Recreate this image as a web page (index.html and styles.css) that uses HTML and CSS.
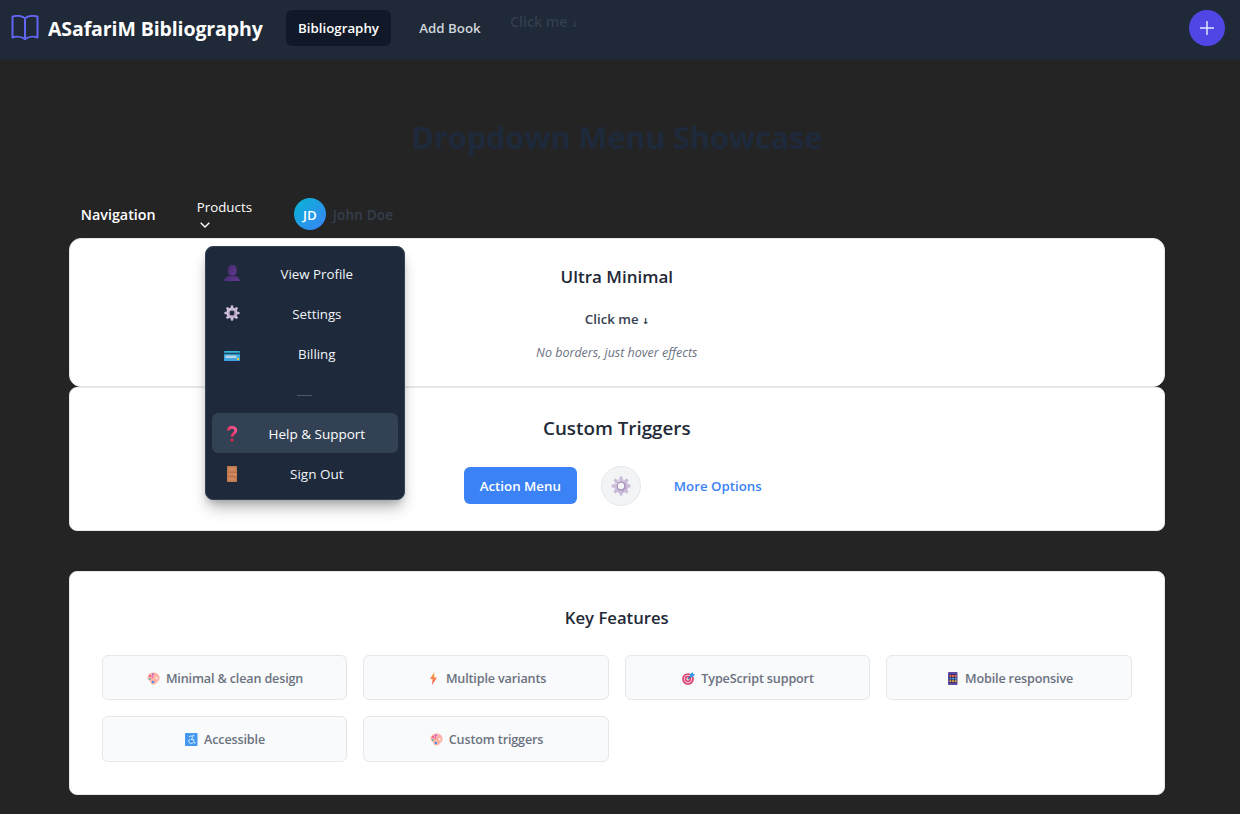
FILE: index.html
```
<!DOCTYPE html>
<html lang="en">
<head>
<meta charset="utf-8">
<title>ASafariM Bibliography</title>
<link rel="stylesheet" href="styles.css">
</head>
<body>
<svg class="defs" width="0" height="0" aria-hidden="true">
  <defs>
    <linearGradient id="gearFill" x1="0" y1="0" x2="1" y2="1"><stop offset="0" stop-color="#e6dcf0"/><stop offset="1" stop-color="#b4a0c8"/></linearGradient>
    <linearGradient id="personFill" x1="0" y1="0" x2="1" y2="1"><stop offset="0" stop-color="#432a6b"/><stop offset="1" stop-color="#643a94"/></linearGradient>
    <linearGradient id="boltFill" x1="0" y1="0" x2="0" y2="1"><stop offset="0" stop-color="#fdb548"/><stop offset="1" stop-color="#f24a45"/></linearGradient>
    <linearGradient id="cardFill" x1="0" y1="0" x2="0" y2="1"><stop offset="0" stop-color="#35b9dc"/><stop offset="1" stop-color="#3e9fe6"/></linearGradient>
    <linearGradient id="questionFill" x1="1" y1="0" x2="0" y2="1"><stop offset="0" stop-color="#ff5a9c"/><stop offset="1" stop-color="#d9213f"/></linearGradient>
  </defs>
  <symbol id="gear" viewBox="0 0 16 16">
    <g stroke="url(#gearFill)" fill="none">
      <circle cx="8" cy="8" r="4.1" stroke-width="3"/>
      <g stroke="#cbbcda" stroke-width="2.7" stroke-linecap="round">
        <path d="M8 1.6v1.2M8 13.2v1.2M1.6 8h1.2M13.2 8h1.2M3.5 3.5l.8.8M11.7 11.7l.8.8M12.5 3.5l-.8.8M4.3 11.7l-.8.8"/>
      </g>
      <circle cx="8" cy="8" r="3.1" stroke="#a493b5" stroke-width="1"/>
    </g>
  </symbol>
  <symbol id="palette" viewBox="0 0 13 13">
    <path d="M6.500.5C3 .5.500 2.800.500 5.500c0 1.800 1 2.600 2 3.200.9.6.8 1.500 1.300 2.400.5 1 1.500 1.500 2.900 1.500 1.700 0 2.400-.9 3-2 .6-1 2.900-1.600 2.900-4.600C12.600 2.800 10 .500 6.500.500z" fill="#ffb3a6"/>
    <circle cx="9.700" cy="6.300" r="1" fill="#f9fafb"/>
    <circle cx="5.800" cy="2.600" r="1" fill="#b44fe0"/>
    <circle cx="3.100" cy="3.900" r=".9" fill="#e8398f"/>
    <circle cx="5.300" cy="5" r=".8" fill="#d83fae"/>
    <circle cx="2.700" cy="6.800" r=".9" fill="#35b7ad"/>
    <circle cx="5.900" cy="10" r="1.200" fill="#4b8fe8"/>
  </symbol>
</svg>

<header class="topbar">
  <svg class="brand-icon" viewBox="0 0 28 26" fill="none" stroke="#6366f1" stroke-width="2" stroke-linejoin="round" stroke-linecap="round"><path d="M14 3.200C10.500.8 5 .6 1.500 1.700V22.500C5 21.300 10.500 21.500 14 24.200 17.500 21.500 23 21.300 26.500 22.500V1.700C23 .6 17.500.8 14 3.200zM14 3.200V24"/></svg>
  <span class="brand">ASafariM Bibliography</span>
  <a class="tab tab-active"><span>Bibliography</span></a>
  <a class="tab tab-plain"><span>Add Book</span></a>
  <span class="ghost">Click me <i class="arrow">↓</i></span>
  <button class="add"><svg width="14" height="14" viewBox="0 0 14 14" stroke="#e0e7ff" stroke-width="1.500"><path d="M7 0v14M0 7h14"/></svg></button>
</header>

<main class="page">
  <h1 class="title"><span>Dropdown Menu Showcase</span></h1>

  <nav class="subnav">
    <span class="subnav-title">Navigation</span>
    <div class="products">
      <span class="products-label">Products</span>
      <svg width="10" height="6" viewBox="0 0 10 6" fill="none" stroke="#fff" stroke-width="1.400"><path d="M.7.700L5 5 9.300.700"/></svg>
      <div class="menu">
        <a class="item"><svg class="glyph" viewBox="0 0 16 16" fill="url(#personFill)"><rect x="4" y="0" width="8.500" height="10.500" rx="4"/><path d="M.3 16c.2-3.500 2.500-5 5.700-5.300h4c3.200.3 5.500 1.800 5.700 5.300z"/></svg><span>View Profile</span></a>
        <a class="item"><svg class="glyph"><use href="#gear"/></svg><span>Settings</span></a>
        <a class="item"><svg class="glyph glyph-low" viewBox="0 0 16 16"><rect y="3" width="16" height="10" rx=".8" fill="url(#cardFill)"/><rect y="4.700" width="16" height="1.600" fill="#204a68"/><rect x="1.500" y="7.500" width="11" height="2.600" fill="#b9d3e2"/><rect x="13" y="10" width="2" height="2" fill="#f1cc3c"/></svg><span>Billing</span></a>
        <div class="rule-item"><i class="rule"></i></div>
        <a class="item item-hover"><svg class="glyph glyph-drop" viewBox="0 0 16 16" fill="none"><path d="M4.400 4.600C4.400 2.300 6 1.300 8 1.300s3.800 1.100 3.800 3.400C11.800 7.300 8 7.100 8 10.800" stroke="url(#questionFill)" stroke-width="2.800"/><circle cx="8" cy="14" r="1.600" fill="#e2294d"/></svg><span class="t-help">Help &amp; Support</span></a>
        <a class="item"><svg class="glyph glyph-drop" viewBox="0 0 16 16"><rect x="3" y="0" width="10" height="16" rx=".6" fill="#bf7a52"/><path d="M4.500 1.500h7v4h-7zM4.500 7h7v2.500h-7zM4.500 11.500h7v3h-7z" fill="#cf885d"/><path d="M4.500 6.200h7M4.500 10.500h7" stroke="#b0683f" stroke-width=".6"/><circle cx="11.500" cy="8.500" r=".8" fill="#f0b06a"/></svg><span class="t-help">Sign Out</span></a>
      </div>
    </div>
    <span class="avatar">JD</span>
    <span class="user">John Doe</span>
  </nav>

  <section class="card card-minimal">
    <h2 class="heading h-ultra">Ultra Minimal</h2>
    <p class="click">Click me <i class="arrow">↓</i></p>
    <p class="hint">No borders, just hover effects</p>
  </section>

  <section class="card card-triggers">
    <h2 class="heading h-custom">Custom Triggers</h2>
    <div class="triggers">
      <button class="action">Action Menu</button>
      <button class="round"><svg width="20" height="20"><use href="#gear"/></svg></button>
      <a class="more">More Options</a>
    </div>
  </section>

  <section class="card card-features">
    <h2 class="heading h-key">Key Features</h2>
    <div class="grid">
      <div class="feature"><svg class="mini"><use href="#palette"/></svg><span>Minimal &amp; clean design</span></div>
      <div class="feature"><svg class="mini" viewBox="0 0 13 13"><path d="M7.300 0L3 7h2.700L5 13l5-7.500H7.300z" fill="url(#boltFill)"/></svg><span>Multiple variants</span></div>
      <div class="feature"><svg class="mini" viewBox="0 0 13 13" fill="none"><circle cx="6" cy="7" r="5" fill="#eadce8" stroke="#dc3d6c" stroke-width="1.700"/><circle cx="6" cy="7" r="2.400" stroke="#dc3d6c" stroke-width="1.500"/><path d="M6 7l4-4" stroke="#276fae" stroke-width="1.200"/><path d="M7.800 2.800L10.500 0l.6 1.800 1.900.6-2.700 2.800-2.300-.3z" fill="#329ae8"/></svg><span>TypeScript support</span></div>
      <div class="feature"><svg class="mini" viewBox="0 0 13 13"><rect x="2" width="9.500" height="13" rx=".7" fill="#5b4aa6"/><rect x="3" y="2.300" width="7.500" height="8.500" fill="#392657"/><g stroke-width="1.800" stroke-dasharray="1.800 .8"><path d="M3.500 4h7" stroke="#f0714f"/><path d="M3.500 6.600h7" stroke="#48aee8"/><path d="M3.500 9.200h7" stroke="#edb744"/></g></svg><span>Mobile responsive</span></div>
      <div class="feature"><svg class="mini" viewBox="0 0 13 13"><rect width="12.500" height="13" rx=".8" fill="#4497ee"/><g fill="none" stroke="#e8f4ff" stroke-width=".9"><circle cx="8.300" cy="2.400" r=".5"/><path d="M4 4l2-1.200 2 1.500L6 6.500h2.700L9 10h1.500"/><path d="M4.500 6.200a2.500 2.500 0 1 0 3.500 3.600"/></g></svg><span>Accessible</span></div>
      <div class="feature"><svg class="mini"><use href="#palette"/></svg><span>Custom triggers</span></div>
    </div>
  </section>
</main>
</body>
</html>
```
FILE: styles.css
```
* { box-sizing: border-box; }
body {
  margin: 0;
  height: 814px;
  overflow: hidden;
  background: #242424;
  color: #fff;
  font-family: "Open Sans", "Noto Sans", sans-serif;
  font-size: 13.300px;
}
h1, h2, p { margin: 0; }
button { border: 0; padding: 0; font-family: inherit; }
.defs { position: absolute; }
i { font-style: normal; }
span, a, p, h1, h2, button { white-space: nowrap; }

/* Top bar */
.topbar {
  display: flex;
  align-items: flex-start;
  height: 60px;
  padding: 10px 15px 0 11px;
  border-bottom: 1px solid #25262b;
  background: #1f2937;
}
.brand-icon { width: 28px; height: 26px; margin-top: 5px; flex: none; }
.brand {
  width: 238px;
  margin-left: 9px;
  line-height: 38px;
  font-size: 19.500px;
  font-weight: 700;
  letter-spacing: -0.1px;
}
.tab {
  height: 36px;
  line-height: 36px;
  border-radius: 6px;
  font-weight: 600;
  text-align: center;
}
.tab-active { width: 105px; background: #111827; }
.tab-plain { width: 90px; margin: 0 1px 0 14px; color: #d1d5db; }
.ghost {
  margin-left: 14px;
  line-height: 24px;
  font-size: 14.200px;
  font-weight: 600;
  color: #323e4e;
}
.arrow { font-family: "DejaVu Sans Mono", monospace; font-size: 11px; line-height: 1; }
.add {
  display: grid;
  place-items: center;
  width: 36px;
  height: 36px;
  margin-left: auto;
  border-radius: 50%;
  background: #4f46e5;
}

/* Page column */
.page { width: 1096px; margin-left: 68.800px; padding-top: 57px; }
.title {
  height: 40px;
  line-height: 40px;
  font-size: 31px;
  font-weight: 700;
  letter-spacing: -0.3px;
  text-align: center;
  color: #1e293b;
}
.subnav { display: flex; align-items: flex-start; height: 81px; padding: 41px 0 0 12px; }
.subnav-title { width: 116px; line-height: 34px; font-size: 14.300px; font-weight: 600; }
.products { position: relative; width: 97px; line-height: 18px; }
.products-label { display: block; line-height: 18px; }
.products svg { display: block; }
.products > svg { margin: 6px 0 0 3px; }
.avatar {
  width: 32px;
  height: 32px;
  border-radius: 50%;
  background: linear-gradient(135deg, #06b6d4, #3b82f6);
  line-height: 34px;
  text-align: center;
  font-weight: 600;
}
.user { margin-left: 7px; line-height: 34px; font-size: 13.500px; font-weight: 600; letter-spacing: 0.2px; color: #353e4c; }

/* Dropdown */
.menu {
  position: absolute;
  top: 48px;
  left: 8px;
  z-index: 2;
  width: 200px;
  height: 254px;
  padding: 6px;
  border: 1px solid #334155;
  border-radius: 8px;
  background: #1e293b;
  box-shadow: 0 10px 15px -3px rgba(0, 0, 0, .3), 0 4px 6px -2px rgba(0, 0, 0, .15);
}
.item, .rule-item {
  display: flex;
  align-items: center;
  gap: 8px;
  height: 40px;
  padding: 0 12px;
  border-radius: 6px;
  color: #f1f5f9;
}
.item-hover { background: #334155; color: #fff; }
.glyph { width: 16px; height: 16px; flex: none; }
.glyph-low { margin-top: 5px; }
.glyph-drop { margin-top: 1px; }
.item span { flex: 1; padding-top: 2px; text-align: center; }
.item .t-help { font-size: 13.500px; }
.rule-item { justify-content: center; padding-top: 4px; }
.rule { width: 15px; height: 1px; background: #4b5869; }

/* Cards */
.card { border: 1px solid #e5e7eb; border-radius: 8px; background: #fff; text-align: center; color: #1f2937; }
.heading { font-weight: 600; }
.card-minimal { height: 149px; padding-top: 25px; border-radius: 12px; }
.h-ultra { font-size: 17px; line-height: 26px; }
.click { margin-top: 18px; line-height: 22px; font-weight: 600; color: #374151; }
.hint { margin-top: 12px; line-height: 22px; font-size: 12.500px; font-style: italic; color: #6b7280; }
.card-triggers { height: 144px; padding-top: 26px; }
.h-custom { font-size: 18.800px; line-height: 28px; }
.triggers { display: flex; align-items: center; height: 40px; margin: 24px 0 0 394px; }
.action {
  width: 113px;
  height: 37px;
  margin-bottom: 1px;
  padding-top: 1px;
  border-radius: 6px;
  background: #3b82f6;
  color: #fff;
  font-size: 13.300px;
  font-weight: 600;
}
.round {
  display: grid;
  place-items: center;
  width: 40px;
  height: 40px;
  margin: 0 33px 0 24px;
  border: 1px solid #e5e7eb;
  border-radius: 50%;
  background: #f3f4f6;
}
.more { color: #3b82f6; font-weight: 600; }
.card-features { height: 224px; margin-top: 40px; padding: 33px 32px 0; }
.h-key { font-size: 16.700px; line-height: 26px; }
.grid { display: grid; grid-template-columns: repeat(4, 1fr); grid-auto-rows: 45.400px; gap: 15.800px 16px; margin-top: 24px; }
.feature {
  display: flex;
  align-items: center;
  justify-content: center;
  gap: 6px;
  padding: 1px 0 0 1px;
  border: 1px solid #e5e7eb;
  border-radius: 6px;
  background: #f9fafb;
  color: #6b7280;
  font-size: 12.600px;
  font-weight: 600;
  letter-spacing: -0.15px;
}
.mini { width: 13px; height: 13px; flex: none; }
```
